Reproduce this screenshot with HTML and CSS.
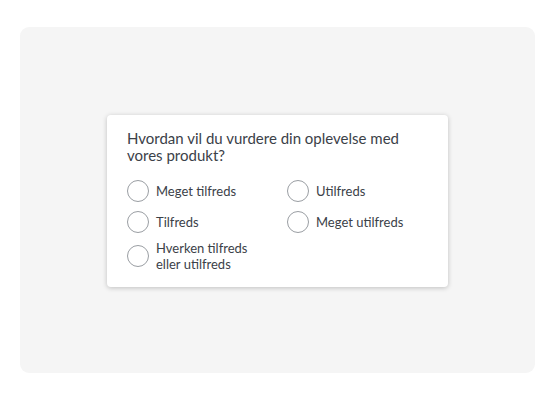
FILE: index.html
```html
<!DOCTYPE html>
<html lang="da">
<head>
<meta charset="utf-8">
<link rel="stylesheet" href="styles.css">
</head>
<body>
<div class="panel">
  <div class="card">
    <p class="question">Hvordan vil du vurdere din oplevelse med vores produkt?</p>
    <div class="options">
      <label class="option"><span class="radio"></span><span class="label">Meget tilfreds</span></label>
      <label class="option"><span class="radio"></span><span class="label">Utilfreds</span></label>
      <label class="option"><span class="radio"></span><span class="label">Tilfreds</span></label>
      <label class="option"><span class="radio"></span><span class="label">Meget utilfreds</span></label>
      <label class="option"><span class="radio"></span><span class="label">Hverken tilfreds<br>eller utilfreds</span></label>
    </div>
  </div>
</div>
</body>
</html>
```
FILE: styles.css
```css
html, body {
  margin: 0;
  padding: 0;
  background: #ffffff;
}
body {
  width: 557px;
  height: 400px;
  font-family: Lato, "Open Sans", sans-serif;
  color: #3b4148;
}
.panel {
  margin: 27px 22px 0 20px;
  height: 346px;
  background: #f5f5f5;
  border-radius: 9px;
  display: flex;
  align-items: center;
  justify-content: center;
}
.card {
  width: 341px;
  box-sizing: border-box;
  margin-top: 2px;
  padding: 15px 20px 15px 20px;
  background: #ffffff;
  border-radius: 4px;
  box-shadow: 0 1px 5px rgba(0,0,0,0.22);
}
.question {
  margin: 0 0 14px 0;
  font-size: 15px;
  line-height: 17px;
  width: 290px;
}
.options {
  display: grid;
  grid-template-columns: 160px 1fr;
  row-gap: 5px;
}
.option {
  display: flex;
  align-items: center;
  gap: 7px;
  min-height: 26px;
  font-size: 13px;
  line-height: 16px;
}
.radio {
  width: 20px;
  height: 20px;
  border: 1px solid #9a9ea3;
  border-radius: 50%;
  flex: none;
  background: #fff;
}
```
